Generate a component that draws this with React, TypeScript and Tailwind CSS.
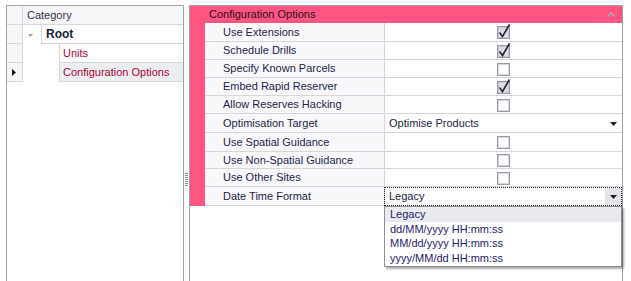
import React from "react";

type Row = { label: string; h: string; kind: "check" | "uncheck" | "select" | "combo"; value?: string };

const rows: Row[] = [
  { label: "Use Extensions", h: "h-[19px]", kind: "check" },
  { label: "Schedule Drills", h: "h-[18px]", kind: "check" },
  { label: "Specify Known Parcels", h: "h-[18px]", kind: "uncheck" },
  { label: "Embed Rapid Reserver", h: "h-[18px]", kind: "check" },
  { label: "Allow Reserves Hacking", h: "h-[18px]", kind: "uncheck" },
  { label: "Optimisation Target", h: "h-[19px]", kind: "select", value: "Optimise Products" },
  { label: "Use Spatial Guidance", h: "h-[19px]", kind: "uncheck" },
  { label: "Use Non-Spatial Guidance", h: "h-[17px]", kind: "uncheck" },
  { label: "Use Other Sites", h: "h-[18px]", kind: "uncheck" },
  { label: "Date Time Format", h: "h-[19px]", kind: "combo", value: "Legacy" },
];

function Arrow() {
  return (
    <svg width="7" height="4" viewBox="0 0 7 4">
      <polygon points="0,0 7,0 3.5,4" fill="#1e1e2e" />
    </svg>
  );
}

function CheckBox({ checked }: { checked: boolean }) {
  return (
    <svg width="16" height="16" viewBox="0 0 16 16" className="overflow-visible">
      <rect x="1.5" y="2.5" width="12" height="12" fill={checked ? "#dcdce4" : "#ffffff"} stroke="#9a9aa6" />
      <rect x="2.5" y="3.5" width="10" height="10" fill="none" stroke={checked ? "#c8c8d2" : "#d8d8e0"} />
      {checked && (
        <path d="M3.5 8.5 L6.5 12.5 L13.5 0.5" fill="none" stroke="#262638" strokeWidth="1.6" strokeLinejoin="miter" />
      )}
    </svg>
  );
}

export default function App() {
  return (
    <div className="relative w-[631px] h-[281px] bg-white overflow-hidden font-['Liberation_Sans',Arial,sans-serif] text-[11px] leading-none flex">
      {/* Left tree panel */}
      <div className="ml-[6px] mt-[5px] w-[178px] h-[276px] border border-b-0 border-[#a2a2aa] flex flex-col">
        <div className="h-[19px] flex border-b border-[#d6d6dc] bg-[#f6f6f8]">
          <div className="w-[16px] border-r border-[#d6d6dc]" />
          <div className="pl-[4px] flex items-center text-[#35354a]">Category</div>
        </div>
        <div className="h-[19px] flex">
          <div className="w-[16px] border-r border-b border-[#d6d6dc] bg-[#f6f6f8]" />
          <div className="w-[18px] flex items-center justify-center">
            <svg width="8" height="8" viewBox="0 0 8 8" className="ml-[-2px]">
              <polygon points="1,3 6,3 3.5,6" fill="#9a9aa4" />
            </svg>
          </div>
          <div className="flex-1 border-l border-b border-[#d6d6dc] pl-[4px] flex items-center font-bold text-[12px] text-[#1a1a33]">
            Root
          </div>
        </div>
        <div className="h-[19px] flex">
          <div className="w-[16px] border-r border-b border-[#d6d6dc] bg-[#f6f6f8]" />
          <div className="w-[36px]" />
          <div className="flex-1 border-l border-b border-[#d6d6dc] pl-[3px] flex items-center text-[#b1003a]">
            Units
          </div>
        </div>
        <div className="h-[19px] flex">
          <div className="w-[16px] border-r border-b border-[#d6d6dc] bg-[#f6f6f8] flex items-center justify-center">
            <svg width="4" height="7" viewBox="0 0 4 7" className="ml-[-1px]">
              <polygon points="0,0 4,3.5 0,7" fill="#111" />
            </svg>
          </div>
          <div className="w-[36px]" />
          <div className="flex-1 border-l border-b border-[#d6d6dc] bg-[#eceef1] pl-[3px] flex items-center text-[#b1003a]">
            Configuration Options
          </div>
        </div>
      </div>

      {/* Splitter */}
      <div className="w-[5px] flex items-center justify-center">
        <svg width="3" height="14" viewBox="0 0 3 14" className="mt-[79px]">
          {[0, 2, 4, 6, 8, 10, 12].map((y) => (
            <rect key={y} x="0" y={y} width="3" height="1" fill="#8a8a96" />
          ))}
        </svg>
      </div>

      {/* Right property grid */}
      <div className="mt-[5px] w-[434px] h-[276px] border border-b-0 border-[#a2a2aa] flex flex-col">
        <div className="h-[17px] bg-[#fe5582] flex items-center pl-[19px] pr-[6px] text-[#2a1020]">
          <span className="flex-1">Configuration Options</span>
          <svg width="8" height="5" viewBox="0 0 8 5" className="mr-[1px]">
            <polyline points="0.5,4.5 4,1 7.5,4.5" fill="none" stroke="#a8a8b4" strokeWidth="1.6" />
          </svg>
        </div>
        {rows.map((r) => (
          <div key={r.label} className={`${r.h} flex`}>
            <div className="w-[15px] bg-[#fe5582]" />
            <div className="w-[180px] border-r border-b border-[#d6d6dc] bg-[#f8f8fb] pl-[18px] flex items-center text-[#1e1e48]">
              {r.label}
            </div>
            {r.kind === "combo" ? (
              <div className="flex-1 flex border border-dotted border-[#222] ml-[-1px]">
                <div className="flex-1 pl-[4px] flex items-center text-[#1e1e48]">{r.value}</div>
                <div className="w-[16px] bg-[#e4e4e8] flex items-center justify-center">
                  <Arrow />
                </div>
              </div>
            ) : (
              <div className="flex-1 border-b border-[#d6d6dc] bg-white flex items-center">
                {r.kind === "select" ? (
                  <>
                    <span className="flex-1 pl-[4px] text-[#1e1e48]">{r.value}</span>
                    <span className="mr-[5px] mt-[1px] flex">
                      <Arrow />
                    </span>
                  </>
                ) : (
                  <div className="flex-1 flex justify-center pl-[1px]">
                    <CheckBox checked={r.kind === "check"} />
                  </div>
                )}
              </div>
            )}
          </div>
        ))}
      </div>

      {/* Dropdown popup */}
      <div className="absolute left-[384px] top-[206px] w-[238px] h-[61px] bg-white border border-[#8e8e98] shadow-[2px_2px_2px_rgba(0,0,0,0.35)] flex flex-col text-[#1d2468]">
        <div className="h-[15px] bg-[#e9eaee] pl-[5px] flex items-center">Legacy</div>
        <div className="h-[15px] pl-[5px] flex items-center">dd/MM/yyyy HH:mm:ss</div>
        <div className="h-[15px] pl-[5px] flex items-center">MM/dd/yyyy HH:mm:ss</div>
        <div className="h-[15px] pl-[5px] flex items-center">yyyy/MM/dd HH:mm:ss</div>
      </div>
    </div>
  );
}
